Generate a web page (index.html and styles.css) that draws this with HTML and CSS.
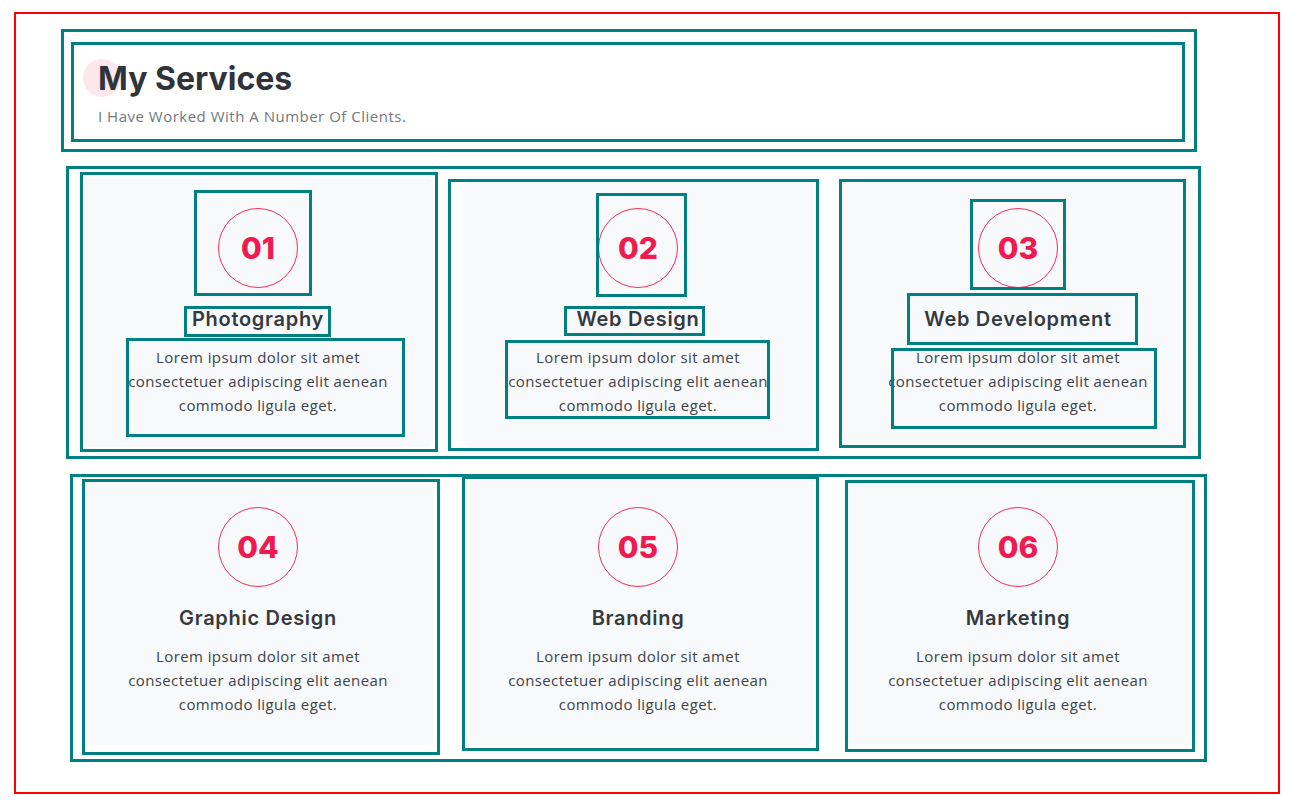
FILE: index.html
```html
<!DOCTYPE html>
<html lang="en">
<head>
<meta charset="utf-8">
<title>My Services</title>
<link rel="stylesheet" href="styles.css">
</head>
<body>
<div class="frame">
  <header class="hdr-out">
    <div class="hdr-in">
      <h1 class="page-title">My Services</h1>
      <p class="sub">I Have Worked With A Number Of Clients.</p>
    </div>
  </header>

  <section class="row row1">
    <article class="card a1">
      <div class="circle n1">01</div>
      <h3 class="title t1">Photography</h3>
      <p class="desc d1">Lorem ipsum dolor sit amet<br>consectetuer adipiscing elit aenean<br>commodo ligula eget.</p>
    </article>
    <article class="card a2">
      <div class="circle n2">02</div>
      <h3 class="title t2">Web Design</h3>
      <p class="desc d2">Lorem ipsum dolor sit amet<br>consectetuer adipiscing elit aenean<br>commodo ligula eget.</p>
    </article>
    <article class="card a3">
      <div class="circle n3">03</div>
      <h3 class="title t3">Web Development</h3>
      <p class="desc d3">Lorem ipsum dolor sit amet<br>consectetuer adipiscing elit aenean<br>commodo ligula eget.</p>
    </article>
  </section>

  <section class="row row2">
    <article class="card card-low a4">
      <div class="circle">04</div>
      <h3 class="title">Graphic Design</h3>
      <p class="desc">Lorem ipsum dolor sit amet<br>consectetuer adipiscing elit aenean<br>commodo ligula eget.</p>
    </article>
    <article class="card card-low a5">
      <div class="circle">05</div>
      <h3 class="title">Branding</h3>
      <p class="desc">Lorem ipsum dolor sit amet<br>consectetuer adipiscing elit aenean<br>commodo ligula eget.</p>
    </article>
    <article class="card card-low a6">
      <div class="circle">06</div>
      <h3 class="title">Marketing</h3>
      <p class="desc">Lorem ipsum dolor sit amet<br>consectetuer adipiscing elit aenean<br>commodo ligula eget.</p>
    </article>
  </section>
</div>
</body>
</html>
```

FILE: styles.css
```css
* { box-sizing: border-box; }

body {
  margin: 0;
  background: #fff;
  font-family: "Open Sans", "Lato", sans-serif;
  color: #343a40;
}

.frame {
  margin: 12px 14px;
  height: 782px;
  border: 2px solid #ff0000;
}

/* header */
.hdr-out {
  margin: 15px 0 0 45px;
  width: 1136px;
  height: 123px;
  border: 3px solid #008080;
  padding: 10px 0 0 7px;
}
.hdr-in {
  width: 1114px;
  height: 100px;
  border: 3px solid #008080;
  padding: 15px 0 0 24px;
}
.page-title {
  position: relative;
  z-index: 0;
  margin: 0;
  font-family: "Inter", sans-serif;
  font-weight: 700;
  font-size: 32px;
  line-height: 38px;
  color: #2f343a;
}
.page-title::before {
  content: "";
  position: absolute;
  z-index: -1;
  left: -15px;
  top: -1px;
  width: 38px;
  height: 38px;
  border-radius: 50%;
  background: #fde6ec;
}
.sub {
  margin: 6px 0 0;
  font-family: "Open Sans", sans-serif;
  font-size: 15px;
  line-height: 24px;
  letter-spacing: 0.5px;
  color: #73787e;
}

/* rows */
.row {
  display: flex;
  gap: 30px;
  border: 3px solid #008080;
}
.row1 {
  margin: 14px 0 0 50px;
  width: 1135px;
  height: 293px;
  padding: 9px 0 0 14px;
}
.row2 {
  margin: 15px 0 0 54px;
  width: 1137px;
  height: 288px;
  padding: 0 0 0 10px;
}

.card {
  position: relative;
  flex: 0 0 350px;
  height: 269px;
  padding: 30px;
  border-radius: 6px;
  background: #f8f9fa;
  text-align: center;
}
.card-low { height: 268px; }

.circle {
  position: relative;
  width: 80px;
  height: 80px;
  margin: 0 auto;
  border: 1px solid #ee2f5e;
  border-radius: 50%;
  display: flex;
  align-items: center;
  justify-content: center;
  font-family: "Inter", sans-serif;
  font-weight: 800;
  font-size: 30px;
  color: #ef1b50;
}

.title {
  position: relative;
  width: fit-content;
  margin: 19px auto 0;
  font-family: "Inter", sans-serif;
  font-weight: 600;
  font-size: 20px;
  line-height: 24px;
  letter-spacing: 0.7px;
  color: #343a40;
}

.desc {
  position: relative;
  margin: 14px 0 0;
  font-family: "Open Sans", sans-serif;
  font-size: 15px;
  line-height: 24px;
  letter-spacing: 0.4px;
  color: #3d4349;
}

/* annotation boxes drawn over the elements */
.card::after,
.n1::after, .n2::after, .n3::after,
.t1::after, .t2::after, .t3::after,
.d1::after, .d2::after, .d3::after {
  content: "";
  position: absolute;
  border: 3px solid #008080;
  pointer-events: none;
}

.a1::after { inset: -6px -5px -5px -3px; }
.a2::after { inset: 1px -6px -4px -15px; }
.a3::after { inset: 1px 7px -1px -4px; }
.a4::after { inset: 2px -7px -10px -1px; }
.a5::after { inset: -1px -6px -6px -1px; }
.a6::after { inset: 3px -2px -7px 2px; }

.n1::after { inset: -19px -15px -9px -25px; }
.n2::after { inset: -16px -10px -10px -3px; }
.n3::after { inset: -10px -9px -3px -9px; }

.t1::after { inset: -1px -7px -6px -8px; }
.t2::after { inset: -1px -6px -5px -13px; }
.t3::after { inset: -14px -26px -14px -17px; }

.d1::after { inset: -7px -2px -20px 13px; }
.d2::after { inset: -5px 13px -2px 12px; }
.d3::after { inset: 3px 6px -12px 18px; }
```
